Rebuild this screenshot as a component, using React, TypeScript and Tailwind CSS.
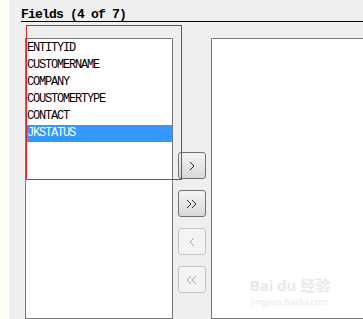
import React from "react";

const items = ["ENTITYID", "CUSTOMERNAME", "COMPANY", "COUSTOMERTYPE", "CONTACT", "JKSTATUS"];

function Chevron({ double, left, disabled }: { double?: boolean; left?: boolean; disabled?: boolean }) {
  const c = disabled ? "#a8a8a8" : "#303030";
  const one = (dx: number) =>
    left ? `${dx + 5},1 ${dx + 1},5 ${dx + 5},9` : `${dx + 1},1 ${dx + 5},5 ${dx + 1},9`;
  return (
    <svg width={double ? 12 : 7} height="10" viewBox={double ? "0 0 12 10" : "0 0 7 10"}>
      <polyline points={one(0)} fill="none" stroke={c} strokeWidth="1" />
      {double && <polyline points={one(5)} fill="none" stroke={c} strokeWidth="1" />}
    </svg>
  );
}

function Btn({ double, left, disabled }: { double?: boolean; left?: boolean; disabled?: boolean }) {
  return (
    <div
      className={
        "w-[28px] h-[27px] rounded-[3px] border flex items-center justify-center " +
        (disabled
          ? "border-[#c4c4c4] bg-[#f4f4f4]"
          : "border-[#707070] bg-gradient-to-b from-[#f4f4f4] to-[#d9d9d9]")
      }
    >
      <Chevron double={double} left={left} disabled={disabled} />
    </div>
  );
}

export default function App() {
  return (
    <div className="w-[363px] h-[319px] overflow-hidden flex bg-[#efefef] relative">
      <div className="w-[9px] shrink-0 bg-[#fffef4]" />
      <div className="flex-1 flex flex-col">
        <div
          className="pl-[12px] pt-[8px] h-[22px] text-[13px] leading-[13px] font-bold text-black tracking-[-0.8px]"
          style={{ fontFamily: '"Liberation Mono", monospace' }}
        >
          Fields (4 of 7)
        </div>
        <div className="ml-[12px] h-px bg-black" />
        <div className="flex mt-[16px] pl-[16px] h-[300px]">
          <div className="w-[148px] shrink-0 border border-[#7a7a7a] bg-white pt-px">
            {items.map((it, i) => (
              <div
                key={it}
                className={
                  "h-[17px] pl-px flex items-center text-[12px] leading-[17px] tracking-[-1.2px] " +
                  (i === 5 ? "bg-[#3399ff] text-white" : "text-black")
                }
                style={{ fontFamily: '"Liberation Mono", monospace' }}
              >
                {it}
              </div>
            ))}
          </div>
          <div className="ml-[5px] pt-[114px] flex flex-col gap-[11px] shrink-0">
            <Btn />
            <Btn double />
            <Btn left disabled />
            <Btn left double disabled />
          </div>
          <div className="ml-[5px] flex-1 border border-r-0 border-[#7a7a7a] bg-white" />
        </div>
      </div>
      <div className="absolute left-[26px] top-[25px] w-[156px] h-[155px] border border-solid border-t-[#cc2a2a] border-r-[#cc2a2a] border-b-[#cc2a2a] border-l-[#cc2a2a] pointer-events-none" />
      <div
        className="absolute left-[245px] top-[278px] w-[90px] flex flex-col items-center gap-[4px] text-[#e9e9e9] pointer-events-none"
        style={{ fontFamily: '"Noto Sans", "Noto Sans CJK SC", sans-serif' }}
      >
        <div className="text-[15px] leading-[15px] h-[15px] font-bold whitespace-nowrap">Bai du 经验</div>
        <div className="text-[9px] leading-[9px] h-[9px] whitespace-nowrap">jingyan.baidu.com</div>
      </div>
    </div>
  );
}
